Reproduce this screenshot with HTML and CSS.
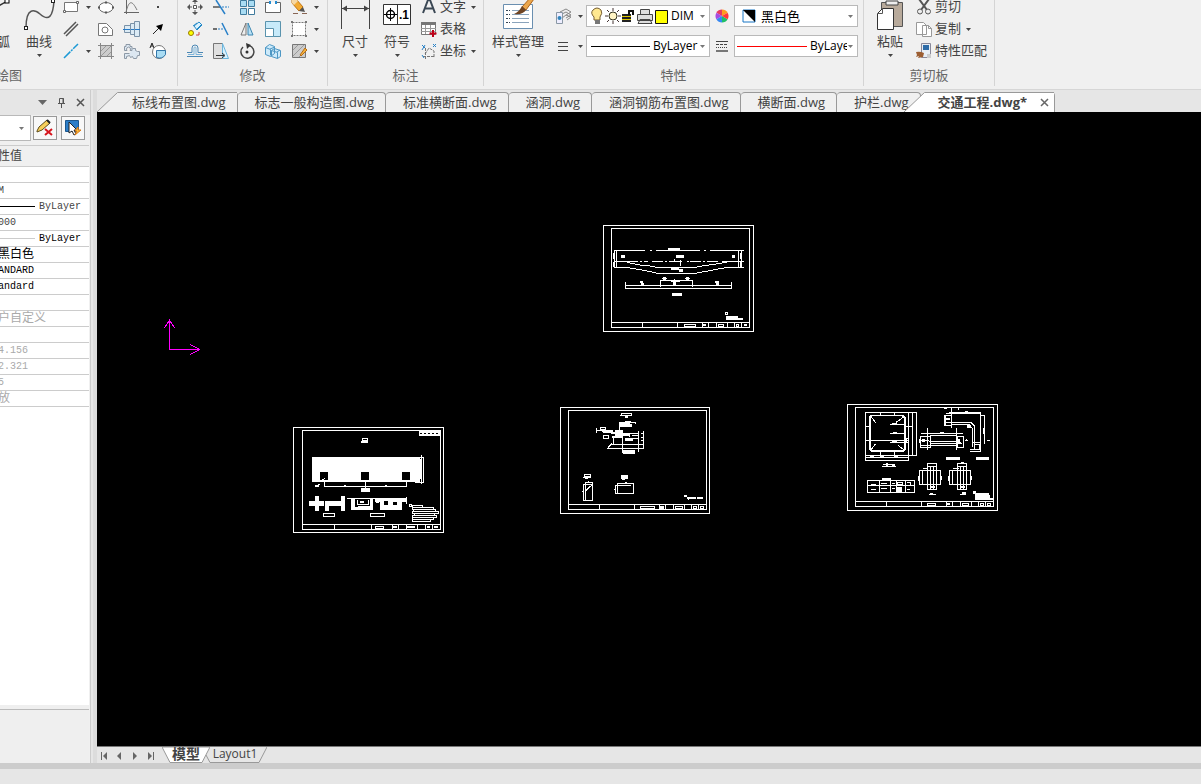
FILE: index.html
```html
<!DOCTYPE html>
<html lang="zh-CN">
<head>
<meta charset="utf-8">
<title>交通工程.dwg</title>
<link rel="stylesheet" href="styles.css">
</head>
<body>
<svg class="defs" aria-hidden="true">
  <symbol id="caret" viewBox="0 0 5 3"><path d="M0 0h5L2.500 3z" fill="#444"/></symbol>
  <symbol id="caret-grey" viewBox="0 0 5 3"><path d="M0 0h5L2.500 3z" fill="#777"/></symbol>
</svg>
<div class="app">
  <header class="ribbon">
    <section class="group group-draw">
      <div class="group-body">
        <button class="big arc-btn">
          <svg class="ico-big" viewBox="0 0 32 34"><path d="M4 34Q10 10 28 5" fill="none" stroke="#333" stroke-width="1.500"/><rect x="24" y="3" width="4" height="4" fill="#fff" stroke="#000"/></svg>
          <span>圆弧</span>
        </button>
        <button class="big curve-btn">
          <svg class="ico-big" viewBox="0 0 32 34"><path d="M3 32C3 10 12 14 17 18C26 26 30 20 31 5" fill="none" stroke="#555" stroke-width="1.500"/><rect x="1.500" y="30.500" width="3" height="3" fill="#fff" stroke="#222"/><rect x="28.500" y="3.500" width="3" height="3" fill="#fff" stroke="#222"/></svg>
          <span>曲线</span><svg class="caret"><use href="#caret"/></svg>
        </button>
        <div class="draw-grid">
          <button aria-label="矩形"><svg class="ico" viewBox="0 0 18 18"><path d="M2.500 4.500h13v9h-13z" fill="#fff" stroke="#777"/><path d="M14.500 3.500h2v2h-2zM1.500 12.500h2v2h-2z" fill="#fff" stroke="#666"/></svg></button>
          <button aria-label="更多矩形"><svg class="caret"><use href="#caret"/></svg></button>
          <button aria-label="椭圆"><svg class="ico" viewBox="0 0 18 18"><ellipse cx="9" cy="9.500" rx="7" ry="5" fill="#fff" stroke="#666"/><path d="M8 3.500h2v2H8zM8 13.500h2v2H8zM1 8.500h2v2H1zM15 8.500h2v2h-2z" fill="#555"/></svg></button>
          <button aria-label="函数曲线"><svg class="ico" viewBox="0 0 18 18"><path d="M3.500 2v14M1 14.500h15" stroke="#666" fill="none"/><path d="M3 14C6 2 9 2 14 12" stroke="#777" fill="none"/></svg></button>
          <button aria-label="点"><svg class="ico" viewBox="0 0 18 18"><path d="M8 8h2v2H8z" fill="#444"/></svg></button>

          <button aria-label="平行线"><svg class="ico" viewBox="0 0 18 18"><path d="M2 14L14 2M4 16L16 4" stroke="#555" stroke-width="1.500"/></svg></button>
          <span></span>
          <button aria-label="孔"><svg class="ico" viewBox="0 0 18 18"><path d="M1.500 3.500h8l6 6v6h-14z" fill="#fff" stroke="#777"/><circle cx="8" cy="10" r="3" fill="none" stroke="#777"/></svg></button>
          <button aria-label="轴"><svg class="ico" viewBox="0 0 18 18"><path d="M1.500 5.500h6v-2h4v-2h5v15h-5v-2h-4v-2h-6z" fill="#dcebf5" stroke="#7a92a8"/><path d="M0 9.500h17" stroke="#267ac8"/><path d="M7.500 4v10M11.500 2v14" stroke="#7a92a8"/></svg></button>
          <button aria-label="引线"><svg class="ico" viewBox="0 0 18 18"><path d="M4 14l6-6" stroke="#222"/><path d="M14 4l-2 7-5-5z" fill="#000"/></svg></button>

          <button aria-label="直线"><svg class="ico" viewBox="0 0 18 18"><path d="M2 16L16 2" stroke="#1c9ad6" stroke-width="1.500" stroke-dasharray="9 1 2 1"/></svg></button>
          <button aria-label="更多直线"><svg class="caret"><use href="#caret"/></svg></button>
          <button aria-label="填充"><svg class="ico" viewBox="0 0 18 18"><path d="M3.500 3.500h11v11h-11z" fill="#ccc" stroke="#777"/><path d="M3 10l7-7M3 15L15 3M9 15l6-6" stroke="#999"/><path d="M1 3.500h16M3.500 1v16M14.500 1v16M1 14.500h16" stroke="#888"/></svg></button>
          <button aria-label="零件"><svg class="ico" viewBox="0 0 18 18"><path d="M3 2.500h4v2h2v4h-2a2 2 0 1 0-3 0H1.500v-4H3zM9.500 6.500h3v2l2 1h2v4h-2l-1 3h-3l-1-2-2 1-1-2-3 1v2h-2v-5h5" fill="#dce7f1" stroke="#8d99a6"/></svg></button>
          <button aria-label="局部放大"><svg class="ico" viewBox="0 0 18 18"><circle cx="10" cy="10" r="6.500" fill="#fff" stroke="#777"/><path d="M7.500 8.500h9v4q-3 5-9 3z" fill="#a9dcf3" stroke="#37a"/><path d="M1 6l2-5 2 5M2 4h2" stroke="#222" fill="none"/></svg></button>
        </div>
      </div>
      <h2 class="shift-left">绘图</h2>
    </section>

    <section class="group group-modify">
      <div class="group-body">
        <div class="modify-grid">
          <button aria-label="移动"><svg class="ico" viewBox="0 0 18 18"><path d="M7.500 7.500h3v3h-3z" fill="#fff" stroke="#555"/><path d="M9 1l3 3H6zM9 17l3-3H6zM1 9l3-3v6zM17 9l-3-3v6z" fill="#555"/><path d="M9 3v3M9 12v3M3 9h3M12 9h3" stroke="#555"/></svg></button>
          <button aria-label="裁剪"><svg class="ico" viewBox="0 0 18 18"><path d="M1 9h8" stroke="#555" stroke-width="1.500"/><path d="M4 2l9 14" stroke="#2980c8" stroke-width="1.500"/><path d="M10 9h7" stroke="#2980c8" stroke-dasharray="2 1"/></svg></button>
          <button aria-label="阵列"><svg class="ico" viewBox="0 0 18 18"><path d="M2.500 2.500h6v6h-6zM10.500 2.500h6v6h-6zM2.500 10.500h6v6h-6z" fill="#a9dcf3" stroke="#407b9d"/><path d="M10.500 10.500h6v6h-6z" fill="#fff" stroke="#407b9d"/></svg></button>
          <button aria-label="打断"><svg class="ico" viewBox="0 0 18 18"><path d="M6 4.500H1.500v10h15v-10H12" fill="#fff" stroke="#666"/><path d="M5 3h2v3H5zM11 3h2v3h-2z" fill="#258bd0"/></svg></button>
          <button aria-label="删除"><svg class="ico" viewBox="0 0 18 18"><path d="M2 2l4-1 7 8-4 4-7-8z" fill="#f2aa32" stroke="#bf7412"/><path d="M2 2l4-1 2 2-4 4-2-2z" fill="#f6d7a3"/><path d="M9 13l4-4 2 5z" fill="#555"/><path d="M3 15.500h5M12 15.500h5" stroke="#865"/></svg></button>
          <button aria-label="更多删除"><svg class="caret"><use href="#caret"/></svg></button>

          <button aria-label="复制"><svg class="ico" viewBox="0 0 18 18"><circle cx="5" cy="13" r="2.500" fill="#ff0" stroke="#987b00"/><path d="M8 6l5-4 3 3-5 5zM7 6l4-3M10 10l5-5" fill="#d9f2ff" stroke="#2589c7"/><path d="M10 15h3v-3" stroke="#c44" fill="none"/></svg></button>
          <button aria-label="延伸"><svg class="ico" viewBox="0 0 18 18"><path d="M1 9h4" stroke="#444" stroke-width="1.500"/><path d="M6 9h6" stroke="#2980c8" stroke-dasharray="2 1"/><path d="M10 3l6 12" stroke="#2980c8" stroke-width="1.500"/></svg></button>
          <button aria-label="镜像"><svg class="ico" viewBox="0 0 18 18"><path d="M8 3v12H3z" fill="#eee" stroke="#777"/><path d="M10 3v12h5z" fill="#b9e0f5" stroke="#3a86b0"/></svg></button>
          <button aria-label="缩放"><svg class="ico" viewBox="0 0 18 18"><path d="M1.500 1.500h15v15h-15z" fill="#c7eafa" stroke="#5a93ad"/><path d="M1.500 8.500h8v8h-8z" fill="#fff" stroke="#5a93ad"/></svg></button>
          <button aria-label="拉伸"><svg class="ico" viewBox="0 0 18 18"><path d="M2.500 2.500h13v13h-13z" fill="#fff" stroke="#777" stroke-dasharray="2 1"/><path d="M1 1h2v2H1zM15 1h2v2h-2zM1 15h2v2H1zM15 15h2v2h-2z" fill="#777"/></svg></button>
          <button aria-label="更多拉伸"><svg class="caret"><use href="#caret"/></svg></button>

          <button aria-label="偏移"><svg class="ico" viewBox="0 0 18 18"><path d="M1 14.500h16M1 10.500h5V6a3 3 0 0 1 6 0v4.500h5" fill="none" stroke="#4a87b4"/><path d="M2 12.500h6V6a1 1 0 0 1 2 0v6.500h6" fill="none" stroke="#7cb5db"/></svg></button>
          <button aria-label="拉长"><svg class="ico" viewBox="0 0 18 18"><path d="M1.500 1.500h9v15h-9z" fill="#e0e0e0" stroke="#777"/><path d="M10.500 1.500l6 15h-6z" fill="#d8f2ff" stroke="#6bb5dc"/><path d="M4 13.500h8M10 11l3 2.500-3 2.500" stroke="#333" fill="none"/></svg></button>
          <button aria-label="旋转"><svg class="ico" viewBox="0 0 18 18"><path d="M11 3.500A6.500 6.500 0 1 1 5 5" fill="none" stroke="#444" stroke-width="1.500"/><path d="M8 1l5 2-4 4z" fill="#333"/><circle cx="9" cy="10" r="1.500" fill="#333"/></svg></button>
          <button aria-label="三维阵列"><svg class="ico" viewBox="0 0 18 18"><path d="M1.500 5.500l4-3 5 2v7l-4 3-5-2zM7.500 8.500l3-2 6 2v6l-3 2-6-2zM1.500 5.500l5 2v6M7.500 8.500l6 2v6M6 7l5-2M13 10l3-2" fill="#cdeafa" stroke="#4d97c4"/></svg></button>
          <button aria-label="编辑填充"><svg class="ico" viewBox="0 0 18 18"><path d="M2.500 2.500h13v13h-13z" fill="#ccc" stroke="#777"/><path d="M3 8l5-5M3 14L14 3M9 15l6-6" stroke="#999"/><path d="M10 13l5-7 2 2-6 6z" fill="#f4b33e" stroke="#b66b14"/></svg></button>
          <button aria-label="更多填充"><svg class="caret"><use href="#caret"/></svg></button>
        </div>
      </div>
      <h2>修改</h2>
    </section>

    <section class="group group-note">
      <div class="group-body">
        <button class="big narrow">
          <svg class="ico-big" viewBox="0 0 32 34"><path d="M2.500 4v29M30.500 4v29M3 12.500h27" stroke="#444" fill="none"/><path d="M3 12.500l5-3v6zM30 12.500l-5-3v6z" fill="#444"/></svg>
          <span>尺寸</span><svg class="caret"><use href="#caret"/></svg>
        </button>
        <button class="big narrow">
          <svg class="ico-big" viewBox="0 0 32 34"><path d="M2.500 8.500h27v20h-27zM16.500 9v19" fill="#fff" stroke="#333"/><circle cx="9.500" cy="18.500" r="4" fill="none" stroke="#000" stroke-width="1.500"/><path d="M3 18.500h13M9.500 12v13" stroke="#000"/><text x="18" y="23" class="icon-num">.1</text></svg>
          <span>符号</span><svg class="caret"><use href="#caret"/></svg>
        </button>
        <div class="list">
          <button><svg class="ico" viewBox="0 0 18 18"><path d="M3 15L8 2h2l5 13M5 10.500h8" stroke="#3b4855" stroke-width="2" fill="none"/></svg><span>文字</span><svg class="caret"><use href="#caret"/></svg></button>
          <button><svg class="ico" viewBox="0 0 18 18"><path d="M1.500 2.500h14v12h-14z" fill="#fff" stroke="#777"/><path d="M1 2h15v3H1z" fill="#777"/><path d="M1 8.500h15M1 11.500h15M5.500 5v9M10.500 5v9" stroke="#999"/><path d="M13 10v7M9.500 13.500h7" stroke="#c00018" stroke-width="2"/></svg><span>表格</span></button>
          <button><svg class="ico" viewBox="0 0 18 18"><path d="M5.500 6v11M3 14.500h12M5 12l4-6 5 3v7" stroke="#777" fill="none" stroke-dasharray="3 1"/><path d="M2 3l3 3M5 3L2 8M13 2l3 3M16 2l-3 3M2 13l2 3" stroke="#2882c7"/></svg><span>坐标</span><svg class="caret"><use href="#caret"/></svg></button>
        </div>
      </div>
      <h2>标注</h2>
    </section>

    <section class="group group-props">
      <div class="group-body">
        <button class="big style-btn">
          <svg class="ico-big" viewBox="0 0 32 34"><path d="M1.500 8.500h29v24h-29z" fill="#fff" stroke="#6a8fb0"/><path d="M4 14.500h4M4 18.500h4M4 22.500h4M4 26.500h4" stroke="#345" stroke-dasharray="2 1"/><path d="M10 14.500h17M10 18.500h17M10 22.500h17M10 26.500h17" stroke="#8aa3bb"/><path d="M20 11l9-10 3 2-8 11z" fill="#eca64b" stroke="#ad641a"/><path d="M20 10l4 4q-3 5-12 4 5-2 8-8z" fill="#704523"/></svg>
          <span>样式管理</span><svg class="caret"><use href="#caret"/></svg>
        </button>
        <div class="prop-grid">
          <button class="split" aria-label="图层"><svg class="ico" viewBox="0 0 18 18"><path d="M6 5l6-3 5 3-5 3M6 8l6-3 5 3-5 3M8 11l4-3 5 2-4 3" fill="#eee" stroke="#888"/><path d="M2.500 5.500h6v11h-6z" fill="#eef" stroke="#8a98a5"/><circle cx="5.500" cy="11" r="2" fill="#3285bd"/></svg><svg class="caret"><use href="#caret"/></svg></button>
          <div class="combo">
            <svg class="layer-icons" viewBox="0 0 78 18"><path d="M3 10Q-1 6 2 3q4-4 8 0 2 3-1 7v3H3z" fill="#ffe890" stroke="#765d32"/><path d="M4 13h5v4H4z" fill="#777"/><circle cx="22" cy="9" r="4" fill="#fff4c4" stroke="#332"/><path d="M22 1v3M22 14v3M14 9h3M27 9h3M16 3l2 2M26 13l2 2M16 15l2-2M26 5l2-2" stroke="#433"/><path d="M31 7h9v8h-9z" fill="#222"/><path d="M31 9.500h9M31 12.500h9" stroke="#ddc700"/><path d="M38 8V4h4v4" fill="none" stroke="#111" stroke-width="2"/><path d="M49.500 7V2.500h9V7M46.500 7.500h15v6h-15zM49 12.500h10l2 4H47z" fill="#ddd" stroke="#444"/><path d="M64.500 3.500h12v13h-12z" fill="#ff0" stroke="#111"/></svg>
            <select aria-label="当前图层"><option>DIM</option></select><svg class="caret"><use href="#caret-grey"/></svg>
          </div>
          <button aria-label="颜色"><svg class="ico" viewBox="0 0 18 18"><path d="M9 9V2.500a6.500 6.500 0 0 1 5.600 3.250z" fill="#ff9c20"/><path d="M9 9V2.500A6.500 6.500 0 0 0 3.400 5.750z" fill="#e83a60"/><path d="M9 9L3.400 5.750a6.500 6.500 0 0 0 0 6.500z" fill="#a84be0"/><path d="M9 9l-5.600 3.250A6.500 6.500 0 0 0 9 15.500z" fill="#3788f2"/><path d="M9 9v6.500a6.500 6.500 0 0 0 5.600-3.250z" fill="#1fbe68"/><path d="M9 9l5.600 3.250a6.500 6.500 0 0 0 0-6.500z" fill="#ff3838"/></svg></button>
          <div class="combo">
            <svg class="swatch" viewBox="0 0 14 14"><path d="M1 1h12v12H1z" fill="#fff" stroke="#1976c5"/><path d="M1 1h12v12z" fill="#000"/></svg>
            <select class="color-name" aria-label="颜色名称"><option>黑白色</option></select><svg class="caret"><use href="#caret-grey"/></svg>
          </div>
          <button class="split" aria-label="线型"><svg class="ico" viewBox="0 0 18 18"><path d="M4 5.500h10M4 9.500h10M4 13.500h10" stroke="#444"/></svg><svg class="caret"><use href="#caret"/></svg></button>
          <div class="combo">
            <span class="sample"></span>
            <select aria-label="线型名称"><option>ByLayer</option></select><svg class="caret"><use href="#caret-grey"/></svg>
          </div>
          <button aria-label="线宽"><svg class="ico" viewBox="0 0 18 18"><path d="M3 4.500h12" stroke="#444"/><path d="M3 7.500h12" stroke="#444" stroke-dasharray="3 1"/><path d="M3 10.500h12" stroke="#444" stroke-dasharray="1 1"/><path d="M3 14h12" stroke="#777" stroke-width="2"/></svg></button>
          <div class="combo">
            <span class="sample sample-red"></span>
            <select aria-label="线宽名称"><option>ByLayer</option></select><svg class="caret"><use href="#caret-grey"/></svg>
          </div>
        </div>
      </div>
      <h2>特性</h2>
    </section>

    <section class="group group-clip">
      <div class="group-body">
        <button class="big paste-btn">
          <svg class="ico-big" viewBox="0 0 32 34"><path d="M7.500 6.500h21v24h-21z" fill="#b8aa9b" stroke="#555"/><path d="M12 9V5h12v4z" fill="#eee" stroke="#444"/><path d="M3.500 17.500l5-5h11v21h-16z" fill="#fff" stroke="#333"/><path d="M8.500 13v4.500H4" fill="none" stroke="#555"/></svg>
          <span>粘贴</span><svg class="caret"><use href="#caret"/></svg>
        </button>
        <div class="list">
          <button><svg class="ico" viewBox="0 0 18 18"><path d="M4 1l8 11M14 1L6 12" stroke="#555" stroke-width="2"/><circle cx="5" cy="13.500" r="2.500" fill="#eee" stroke="#555"/><circle cx="13" cy="13.500" r="2.500" fill="#eee" stroke="#555"/></svg><span>剪切</span></button>
          <button><svg class="ico" viewBox="0 0 18 18"><path d="M1.500 2.500h7l3 3v9h-10zM7.500 5.500h6l3 3v8h-9z" fill="#fff" stroke="#999"/><path d="M13.500 5.500v3h3" fill="none" stroke="#999"/></svg><span>复制</span><svg class="caret"><use href="#caret"/></svg></button>
          <button><svg class="ico" viewBox="0 0 18 18"><path d="M6.500 1.500h9v14h-9z" fill="#e8eef5" stroke="#889"/><path d="M8 3h6v5H8z" fill="#2e6ca8"/><path d="M12 12h4v4h-4z" fill="#ccc"/><path d="M1 10q4-1 8 1l-1 4-5 1 1-2-3 1 1-2z" fill="#9c5e32"/></svg><span>特性匹配</span></button>
        </div>
      </div>
      <h2>剪切板</h2>
    </section>
  </header>

  <div class="workspace">
    <aside class="panel">
      <div class="panel-title">
        <button aria-label="菜单"><svg viewBox="0 0 9 5" width="9" height="5"><path d="M0 0h9L4.500 5z" fill="#666"/></svg></button>
        <button aria-label="固定"><svg viewBox="0 0 9 11" width="9" height="11"><path d="M2.500 6V1.500h4V6M1 6.500h7M4.500 7v4" fill="none" stroke="#555"/><path d="M6 1v5" stroke="#555"/></svg></button>
        <button aria-label="关闭面板"><svg viewBox="0 0 9 9" width="9" height="9"><path d="M1 1l7 7M8 1L1 8" stroke="#555" stroke-width="1.500"/></svg></button>
      </div>
      <div class="panel-tools">
        <select aria-label="对象类型"><option></option></select>
        <svg class="caret"><use href="#caret-grey"/></svg>
        <button aria-label="清除"><svg viewBox="0 0 18 18" width="18" height="18"><path d="M1 12l2-4 8-7 3 3-8 7-5 2z" fill="#f8cf59" stroke="#5c4b1b"/><path d="M11 1l3 3" stroke="#222" stroke-width="2"/><path d="M9 10l7 6M16 10l-7 6" stroke="#d6141d" stroke-width="2"/></svg></button>
        <button aria-label="快速选择"><svg viewBox="0 0 18 18" width="18" height="18"><path d="M1.500 1.500h13v11h-13z" fill="#2b7dc8" stroke="#1b578f"/><path d="M5 3v11l3-2 2 4 2-1-2-4h3z" fill="#fff" stroke="#222"/><path d="M14 8l-3 4h2l-2 4 6-5h-3z" fill="#ffc33d" stroke="#dc7a13"/></svg></button>
      </div>
      <div class="prop-sheet">
        <table>
          <thead><tr><th scope="col">属性值</th></tr></thead>
          <tbody>
            <tr><td></td></tr>
            <tr><td>DIM</td></tr>
            <tr><td><span class="row-line"><i class="dark"></i>ByLayer</span></td></tr>
            <tr><td>1.000</td></tr>
            <tr class="strong"><td><span class="row-line"><i></i>ByLayer</span></td></tr>
            <tr class="strong cjk"><td class="inset">黑白色</td></tr>
            <tr class="strong"><td>STANDARD</td></tr>
            <tr class="strong"><td>Standard</td></tr>
            <tr><td></td></tr>
            <tr class="dim cjk"><td>用户自定义</td></tr>
            <tr><td></td></tr>
            <tr class="dim"><td>814.156</td></tr>
            <tr class="dim"><td>182.321</td></tr>
            <tr class="dim"><td>265</td></tr>
            <tr class="dim cjk"><td>缩放</td></tr>
          </tbody>
        </table>
      </div>
      <div class="panel-foot"></div>
    </aside>

    <main class="docs">
      <nav class="doc-tabs">
        <button class="tab slanted first"><svg class="slant" viewBox="0 0 21 20"><path d="M0 20L21 0V20z" fill="#f0f0f0"/><path d="M0 20L20.500 .500H21" fill="none" stroke="#999"/></svg><span>标线布置图.dwg</span></button>
        <button class="tab">标志一般构造图.dwg</button>
        <button class="tab">标准横断面.dwg</button>
        <button class="tab">涵洞.dwg</button>
        <button class="tab">涵洞钢筋布置图.dwg</button>
        <button class="tab">横断面.dwg</button>
        <button class="tab">护栏.dwg</button>
        <button class="tab slanted active"><svg class="slant" viewBox="0 0 21 20"><path d="M0 20L21 0V20z" fill="#fff"/><path d="M0 20L20.500 .500H21" fill="none" stroke="#999"/></svg><span>交通工程.dwg*</span><svg class="close" viewBox="0 0 9 9"><path d="M1 1l7 7M8 1L1 8" stroke="#666" stroke-width="1.500"/></svg></button>
      </nav>

      <div class="canvas">
        <svg class="ucs" viewBox="0 0 36 36" fill="none" stroke="#f0f" shape-rendering="crispEdges"><path d="M5.500 0v30.500H36M.500 9l5-8 5 8M26 25.500l10 5-10 5"/></svg>

        <svg class="sheet sheet-a" viewBox="0 0 495 375">
          <path d="M26 32H475V349H26zM50 41H463V337H50zM50 322H463M142 322V337M247 322V337M322 322V337M340 322V337M364 322V337M397 322V337M418 322V337M439 322V337M269 329h32v6h-32zM370 329h16v5h-16zM424 329h6v5h-6z"/>
          <path d="M58 106H150M165 106h6M183 106H315M327 106h6M345 106H446M58 106V157M65 106V157M431 106V157M439 106V157M56 115v18M56 142v14M437 115v18M437 142v14M58 139H128M134 139h6M147 139H158M170 139H204M210 139h6M222 139H260M275 139h6M286 139H318M324 139h6M336 139H370M380 139H446M58 157H96M431 157h16M96 142l20 4 20 4 24 2 26 5H302l24-5 30-4 24-4 20-4M96 157l20 4 24 4 26 5 22 5H302l24-5 24-4 24-5 26-4 5 0H431M221 140h40M256 134v20M239 137v-6M219 157h54"/>
          <path d="M92 202V220H409V202M92 211H409M197 215V196H292V215M202 189h13M271 189h13M228 199h26M238 193v18" />
          <path class="fill" d="M219 98h36v7h-36zM243 120h24v9h-24zM78 120h12v9H78zM411 120h9v9h-9zM228 156h24v9h-24zM253 162h12v8h-12zM231 234h30v9h-30zM135 197h9v6h3v8h-10v-6h-2zM360 197h12v13h-9v-7h-3zM205 185h7v9h-7zM274 185h7v9h-7zM233 195h10v15h-8v-6h-2zM393 303h36v5h15v7h-51zM323 327h10v6h-10zM446 327h10v6h-10z"/>
          <path d="M391 292h6v6h-6z"/>
        </svg>

        <svg class="sheet sheet-b" viewBox="0 0 495 360">
          <path d="M26 23H475V337H26zM53 32H466V328H53zM53 313H466M148 313V328M260 313V328M322 313V328M340 313V328M364 313V328M397 313V328M421 313V328M442 313V328M271 319h25v7h-25zM427 318h6v5h-6z"/>
          <path class="fill" d="M402 32h65v16h-65zM231 54h18v15h-21v-7h3zM81 111H405V186H81zM228 204h27v12h-27zM90 228h12v15h15v15h-15v15H90v-15H72v-15h18zM120 243h48v-15h12v45h-12v-15h-36v15h-12zM198 236h66v34h-66zM285 246h66v24h-66zM270 234h40v12h-40zM310 234h55v12h-55zM90 195h11v6H90zM323 317h14v6h-14zM367 318h24v6h-24zM446 318h12v6h-12z"/>
          <path class="void" d="M105 156h24v24h-24zM228 156h24v24h-24zM351 156h24v24h-24zM406 39h6v3h-6zM418 39h6v3h-6zM430 39h6v3h-6zM442 39h6v3h-6zM454 39h6v3h-6zM234 58h12v3h-12zM210 237h9v24h-9zM219 237h36v22h-36zM297 243h12v12h-12zM325 246h12v10h-12z"/>
          <path class="fill" d="M215 240h38v15h-38z"/><path class="void" d="M220 241h28v12h-28z"/><path class="fill" d="M224 243h14v6h-14z"/>
          <path d="M405 112H416V186H390M409 105v86M406 118v60M118 186v13h246v-13M241 186v18M177 197h6M300 197h6M98 199l5-7M106 186l14-12M186 234h84M272 246h10M364 231v21M319 234v12M115 280h33v10h-33zM256 280h42v10h-42zM373 253h6v6h-6zM382 256h31v7h-31zM382 263h64v5h-64zM385 268h65v6h-65zM382 274h79v7h-79zM388 281h60v5h-60zM382 286h73v6h-73zM382 292h64v5h-64zM382 297h55v7h-55z"/>
        </svg>

        <svg class="sheet sheet-c" viewBox="0 0 495 360">
          <path d="M26 23H472V340H26zM50 32H463V328H50zM50 313H463M142 313V328M247 313V328M322 313V328M340 313V328M364 313V328M397 313V328M418 313V328M439 313V328M265 319h43v7h-43zM370 319h20v6h-20zM424 319h9v6h-9zM445 319h9v6h-9zM209 40h30v6h-30zM205 46h8"/>
          <path d="M133 84v14M133 92h30M145 83h15v6h-15zM202 68V91M202 68h50M190 91h12M212 100V160M212 100H260M240 106h20M234 115h26M260 94V155M275 94V145M184 115v16M164 145H275M178 132H272M168 142l12-12M266 100h8M266 111h8M266 121h8M266 133h8M154 107h15v8h-15z"/>
          <path class="fill" d="M202 65h18v-2h16v3h16v6h-12v8h-38zM145 90h38v5h7v-5h23v8h21v14h-13v3h-42v-8h11v-5h-14v-3h-21zM218 115h25v8h-25zM213 151h36v10h-36zM219 47h10v6h-10zM96 228h18v5h-5v4h-10v-4h-6zM208 228h19v5h-8v7h-10v-7h-3zM405 291h27v6h-27zM435 291h18v6h-18zM396 285h9v6h-9zM323 319h12v7h-12z"/>
          <path class="void" d="M214 109h18v4h-18zM234 68h15v3h-15z"/>
          <path d="M97 223h18v8H97zM209 226h18v8h-18zM95 253h27v47H95zM100 247h22v54h-22zM122 253l-20 18M91 274h6M107 244h5M197 250h47v30h-47zM190 256h48M190 256v24h12M186 267h6M219 247h7M406 294l4 5"/>
        </svg>

        <svg class="sheet sheet-d" viewBox="0 0 495 360">
          <path d="M23 19H472V337H23zM47 28H460V325H47zM47 310H460M140 310V325M245 310V325M320 310V325M338 310V325M361 310V325M394 310V325M415 310V325M436 310V325M262 317h25v6h-25zM367 317h18v6h-18zM421 317h9v6h-9zM441 317h10v5h-10z"/>
          <path d="M77 43H230V172H206V187H77zM77 172H206V43M218 43V172M77 85h12M194 85h26M77 127h129M121 44v8M163 44v8M121 161v10M163 161v10M77 178h128M91 175h12M121 175h12M163 175h12M198 121h8v12h-8z"/>
          <path class="fill" d="M86 57v96l7 9h98l6-7V57l-6-7H93z"/>
          <path class="void" d="M92 60v90l5 6h90l4-5V61l-6-6H98z"/>
          <path d="M95 58l12 17M191 57l-24 17M95 153l12-16M189 153l-16-12M150 80h44M150 106h44M150 132h44M92 127h99M126 205h42M130 200h34"/>
          <path class="fill" d="M155 76h16v6h-16zM158 102h13v6h-13zM157 127h15v7h-15zM137 196h8v8h-8zM156 198h9v6h-9zM126 240h27v7h-27z"/>
          <path d="M83 247H223V283H83zM83 262H223M119 247V283M152 247V283M169 247V283M196 247V283M92 258h17M92 274h16M124 257h17M124 271h17M155 256h10M155 271h10M173 254h15v6h-15zM200 253h12v7M201 273h9"/>
          <path class="fill" d="M169 267h18v16h-18z"/>
          <path d="M262 91V156M349 91V156M243 106h127M269 113h80M240 115h30v33h-30zM242 127h25M267 131h84M241 141h110M351 115h20v33h-20zM270 136h82M350 121l13 16h-32M300 103h12M238 124v12M376 127h9M380 123v5"/>
          <path d="M313 52h22v30h-22zM335 31V89M316 55v26M318 73h75l9 10v58M335 79h53l8 12v56M327 43h95v93M317 46h105M434 52v86M422 52h12M319 62h12M313 31h8M354 30v7M382 80l7 9M397 133h25v28h-33M402 138h15v15h-15zM391 154h30M441 127h9M431 90v18M374 40h10"/>
          <path class="fill" d="M318 177h42v9h-42zM408 177h39v9h-39zM381 82h12v8h-12zM317 60h12v5h-12zM354 122h7v16h-7zM247 123h9v10h-9z"/>
          <path d="M238 217H302V260H238zM247 217V260M262 196h28v78h-28zM270 205V274M280 205V274M262 205h28M249 211h16M235 234v14M305 233v12M271 264h12v5h-12zM268 288h20M328 217H392V260H328zM337 217V260M352 196h28v78h-28zM360 205V274M370 205V274M352 205h28M340 211h16M325 234v14M395 233v12M361 264h12v5h-12zM360 288h18M363 194h8"/>
          <path class="fill" d="M270 284h10v7h-10zM365 282h12v8h-12zM399 279h9v6h38v6h5v9h9v7h-55v-20h-6zM321 316h10v6h-10z"/>
        </svg>
      </div>

      <nav class="layout-tabs">
        <button class="nav-btn" aria-label="第一个"><svg viewBox="0 0 8 8"><path d="M1.500 0v8" stroke="#666"/><path d="M7 0v8L3 4z" fill="#666"/></svg></button>
        <button class="nav-btn" aria-label="上一个"><svg viewBox="0 0 8 8"><path d="M6 0v8L2 4z" fill="#666"/></svg></button>
        <button class="nav-btn" aria-label="下一个"><svg viewBox="0 0 8 8"><path d="M2 0v8l4-4z" fill="#666"/></svg></button>
        <button class="nav-btn" aria-label="最后一个"><svg viewBox="0 0 8 8"><path d="M6.500 0v8" stroke="#666"/><path d="M1 0v8l4-4z" fill="#666"/></svg></button>
        <button class="sheet-tab model"><svg viewBox="0 0 48 16" preserveAspectRatio="none"><path d="M0 0l8 15.500h32L48 0z" fill="#fff" stroke="#999"/></svg><span>模型</span></button>
        <button class="sheet-tab layout"><svg viewBox="0 0 64 16" preserveAspectRatio="none"><path d="M3 8l4 7.500h49L64 0" fill="none" stroke="#999"/></svg><span>Layout1</span></button>
      </nav>
    </main>
  </div>
  <footer class="status"></footer>
</div>
</body>
</html>
```
FILE: styles.css
```css
* { box-sizing: border-box; }
body {
  margin: 0;
  font: 13px/16px "Open Sans", "Noto Sans CJK SC", sans-serif;
  color: #444;
  background: #e6e6e6;
}
button {
  border: 0;
  padding: 0;
  margin: 0;
  background: none;
  font: inherit;
  color: inherit;
  white-space: nowrap;
}
select {
  appearance: none;
  border: 0;
  padding: 0;
  background: none;
  font: inherit;
  color: #000;
}
svg { display: block; flex: none; }
.defs { display: none; }
.app { display: flex; flex-direction: column; height: 100vh; overflow: hidden; }

/* Ribbon */
.ribbon {
  display: flex;
  flex: none;
  height: 90px;
  background: #f0f0f0;
  border-bottom: 1px solid #d6d6d6;
  overflow: hidden;
}
.group {
  display: flex;
  flex-direction: column;
  flex: none;
  border-right: 1px solid #d4d4d4;
  margin-bottom: 3px;
}
.group-draw { width: 178px; }
.group-modify { width: 150px; }
.group-note { width: 156px; }
.group-props { width: 380px; }
.group-clip { width: 131px; }
.group-body { display: flex; height: 66px; margin-top: -4px; }
.group h2 {
  margin: 5px 0 0;
  font-size: 13px;
  font-weight: 400;
  line-height: 16px;
  text-align: center;
  color: #666;
}
.group h2.shift-left { text-align: left; margin-left: -4px; }
.caret { width: 5px; height: 3px; }
.ico { width: 18px; height: 18px; }
.ico-big { width: 32px; height: 34px; }
.big { display: flex; flex-direction: column; align-items: center; gap: 2px; }
.big span { line-height: 18px; }
.big .caret { margin-top: 2px; }
.arc-btn { width: 38px; margin-left: -22px; }
.curve-btn { width: 38px; margin: 0 3px 0 4px; }
.narrow { width: 42px; }
.group-note .group-body { padding-left: 6px; }
.icon-num { font: 700 12px "Liberation Sans", sans-serif; fill: #000; }
.draw-grid, .modify-grid { display: grid; grid-template-rows: repeat(3, 22px); place-items: center; }
.draw-grid { grid-template-columns: 20px 14px 22px 30px 22px; }
.modify-grid { grid-template-columns: repeat(5, 26px) 8px; margin-left: 4px; }
.list { display: flex; flex-direction: column; }
.list button { display: flex; align-items: center; height: 22px; gap: 2px; }
.list span { padding-bottom: 2px; }
.list .caret { margin-left: 3px; }
.group-note .list { margin-left: 2px; }
.style-btn { width: 56px; margin-left: 6px; }
.prop-grid {
  display: grid;
  grid-template-columns: 32px 124px 24px 124px;
  grid-template-rows: 22px 22px;
  align-items: center;
  justify-items: center;
  row-gap: 8px;
  margin: 9px 0 0 8px;
}
.prop-grid .split { display: flex; align-items: center; gap: 6px; justify-self: start; }
.combo {
  display: flex;
  align-items: center;
  width: 124px;
  height: 22px;
  padding: 0 4px;
  border: 1px solid #b9b9b9;
  background: #fff;
  font-size: 12px;
}
.combo select { flex: 1; min-width: 0; overflow: hidden; text-overflow: clip; }
.layer-icons { width: 78px; height: 18px; margin-right: 2px; }
.swatch { width: 14px; height: 14px; margin: 0 5px 0 3px; }
.combo .color-name { font-size: 13px; }
.sample { flex: none; width: 59px; height: 1px; margin-right: 3px; background: #000; }
.sample-red { width: 70px; margin: 0 3px 0 -2px; background: #f00; }
.combo .caret { margin-left: 1px; }
.paste-btn { width: 50px; margin-left: 1px; }

/* Workspace */
.workspace { display: flex; flex: 1; min-height: 0; }
.panel {
  display: flex;
  flex-direction: column;
  flex: none;
  width: 91px;
  overflow: hidden;
  background: #f0f0f0;
  border-right: 1px solid #ccc;
}
.panel-title {
  display: flex;
  align-items: center;
  justify-content: flex-end;
  gap: 10px;
  height: 25px;
  padding-right: 5px;
  background: #e6e6e6;
}
.panel-tools { display: flex; align-items: center; height: 30px; padding-bottom: 4px; }
.panel-tools select { width: 31px; height: 26px; border: 1px solid #b9b9b9; border-left: 0; background: #fff; }
.panel-tools .caret { margin: 0 7px 0 -12px; }
.panel-tools button {
  display: grid;
  place-items: center;
  width: 24px;
  height: 24px;
  margin-left: 2px;
  border: 1px solid #999;
  background: #f8f8f8;
}
.panel-tools button + button { margin-left: 4px; }
.prop-sheet { flex: 1; border-top: 1px solid #ccc; background: #fff; margin-right: 1px; }
.prop-sheet table { width: calc(100% + 14px); margin-left: -14px; border-collapse: collapse; }
.prop-sheet th, .prop-sheet td {
  height: 16px;
  padding: 0;
  border-bottom: 1px solid #ccc;
  font: 10px/15px "Liberation Mono", "Noto Sans CJK SC", monospace;
  text-align: left;
  white-space: nowrap;
}
.prop-sheet th { height: 20px; padding-top: 3px; font-size: 12px; background: #f0f0f0; }
.prop-sheet .cjk td { padding-top: 2px; font-size: 12px; line-height: 13px; }
.prop-sheet .cjk .inset { padding-left: 12px; }
.strong { color: #000; }
.dim { color: #aaa; }
.row-line { display: flex; align-items: center; gap: 4px; }
.row-line i { width: 49px; border-top: 1px solid #ccc; }
.row-line .dark { border-color: #000; }
.panel-foot { height: 54px; background: #efefef; border-top: 1px solid #bbb; box-shadow: 0 -4px #efefef; margin-right: 1px; }

.docs { display: flex; flex-direction: column; flex: 1; min-width: 0; margin-left: 2px; border-left: 4px solid #dcdcdc; }
.doc-tabs { display: flex; align-items: flex-end; height: 22px; background: #e6e6e6; }
.tab {
  display: flex;
  align-items: center;
  flex: none;
  height: 20px;
  padding: 0 11px 1px 17px;
  background: #f0f0f0;
  border: 1px solid #999;
  border-width: 1px 1px 0 0;
  border-radius: 4px 4px 0 0;
}
.slanted { border-top: 0; padding: 0; background: none; }
.slanted span { align-self: stretch; line-height: 18px; padding: 0 11px 0 14px; border-top: 1px solid #999; background: #f0f0f0; }
.slant { width: 21px; height: 20px; }
.tab.active { margin-left: -17px; font-weight: 700; }
.tab.active span { padding: 0 0 0 13px; background: #fff; }
.tab.active .close { width: 27px; height: 20px; padding: 5px 5px 5px 13px; border-top: 1px solid #999; background: #fff; }

.canvas { flex: 1; min-height: 0; position: relative; overflow: hidden; background: #000; }
.ucs { position: absolute; left: 67px; top: 207px; width: 36px; height: 36px; }
.sheet { position: absolute; width: 165px; height: 120px; fill: none; stroke: #fff; stroke-width: 3px; shape-rendering: crispEdges; }
.sheet .fill { fill: #fff; stroke: none; }
.sheet .void { fill: #000; stroke: none; }
.sheet-a { left: 498px; top: 103px; height: 125px; }
.sheet-b { left: 188px; top: 308px; }
.sheet-c { left: 455px; top: 288px; }
.sheet-d { left: 743px; top: 286px; }

.layout-tabs { display: flex; align-items: center; height: 17px; border-top: 1px solid #777; background: #e6e6e6; }
.nav-btn { width: 16px; display: grid; place-items: center; margin-top: 2px; }
.nav-btn:first-child { width: 14px; }
.nav-btn svg { width: 8px; height: 8px; }
.sheet-tab { display: grid; place-items: center; height: 16px; }
.sheet-tab > * { grid-area: 1 / 1; }
.sheet-tab span { padding-bottom: 2px; }
.sheet-tab svg { width: 100%; height: 16px; }
.sheet-tab.model { width: 48px; margin-left: 3px; font-weight: 700; font-size: 14px; line-height: 14px; z-index: 1; }
.sheet-tab.layout { width: 64px; margin-left: -7px; font-size: 12px; line-height: 14px; }
.status { flex: none; height: 21px; background: #e6e6e6; border-top: 6px solid #ccc; }
```
